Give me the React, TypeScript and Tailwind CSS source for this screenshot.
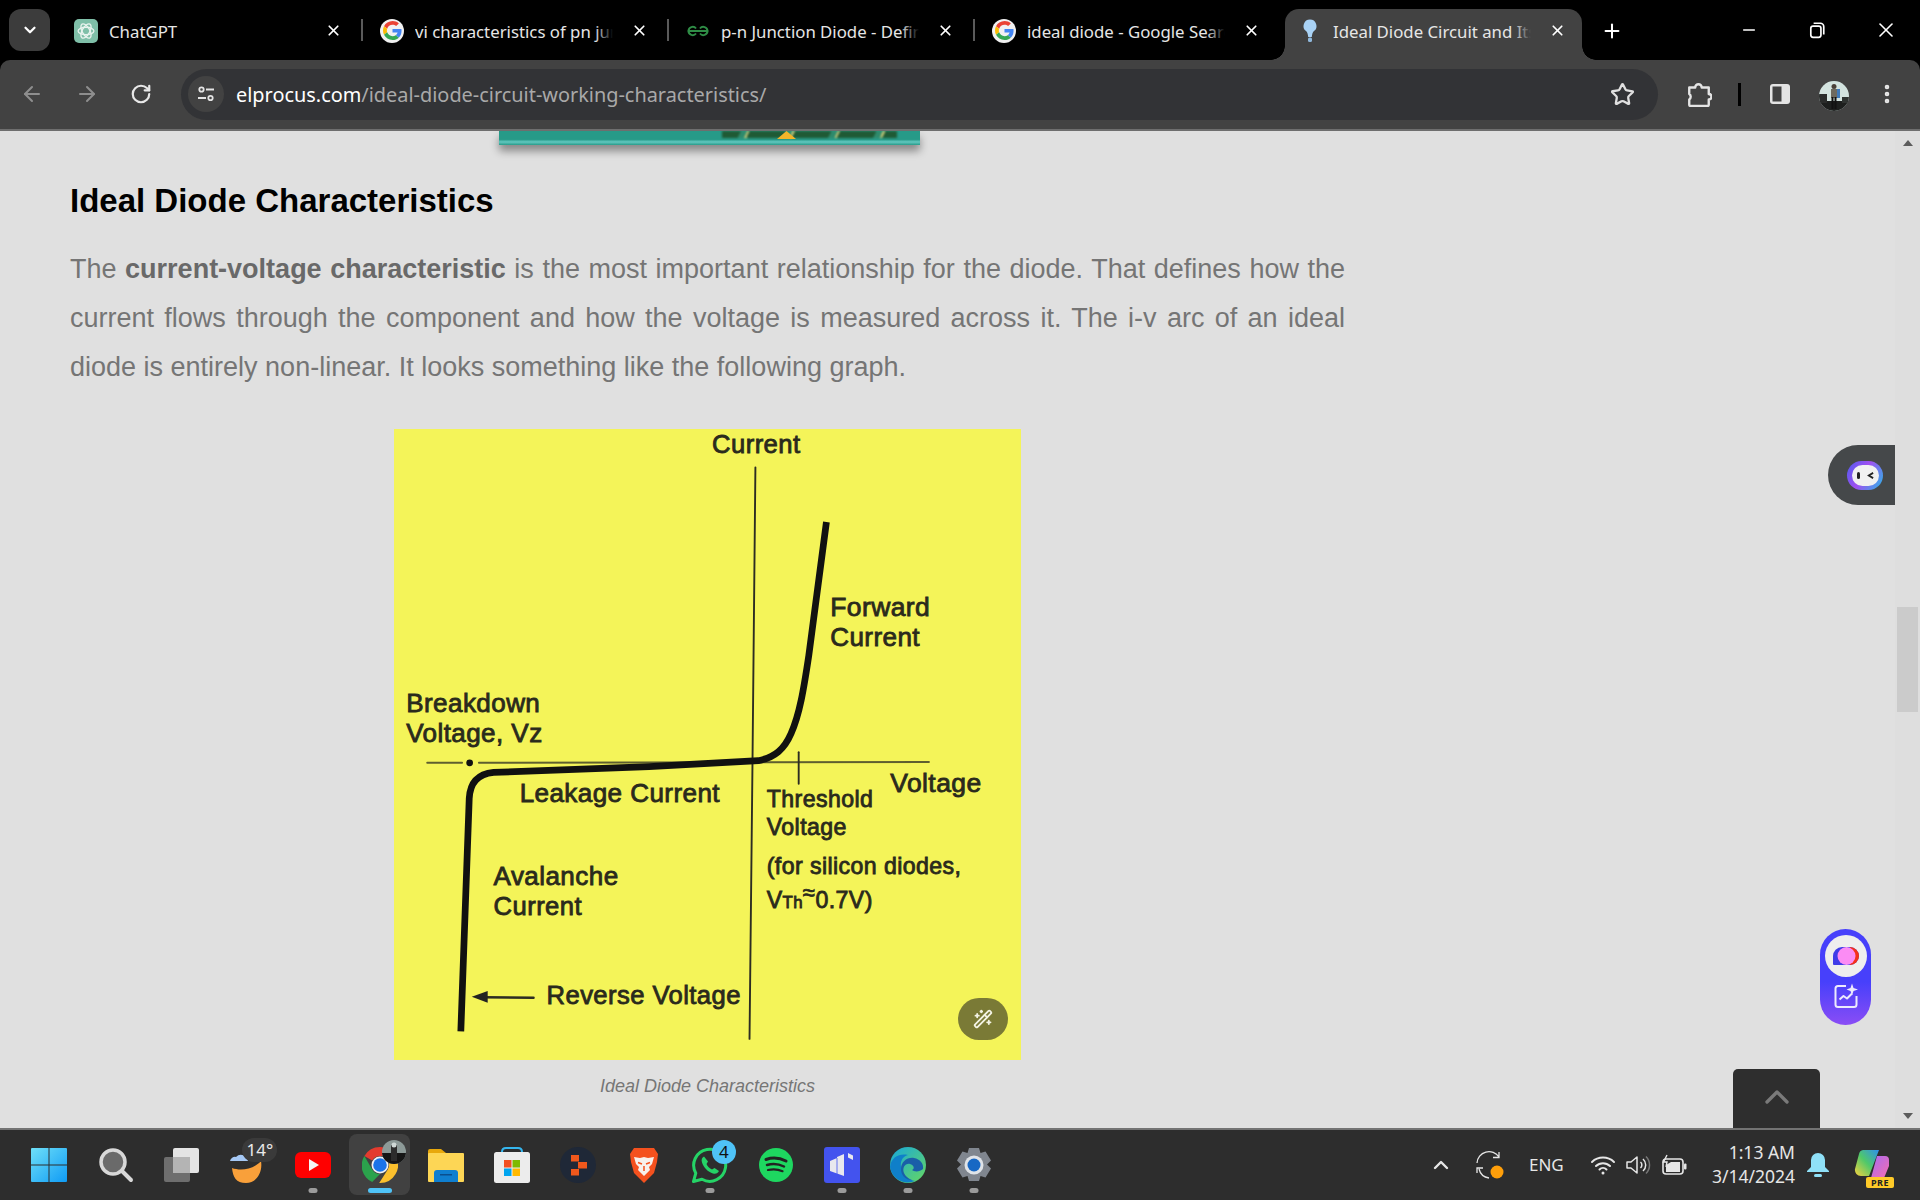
import { ArrowLeft, ArrowRight, ChevronDown, ChevronUp, Minus, MoreVertical, Plus, RotateCw, Star, WandSparkles, X } from "lucide-react";

const sans = "font-['Noto_Sans',sans-serif]";

function GoogleIcon() {
  return (
    <div className="w-6 h-6 rounded-full bg-[#f1f1f1] flex items-center justify-center">
      <svg viewBox="0 0 48 48" className="w-[19px] h-[19px]">
        <path fill="#EA4335" d="M24 9.5c3.5 0 6.7 1.300 9.200 3.400l6.900-6.900C35.900 2.200 30.300 0 24 0 14.600 0 6.500 5.400 2.600 13.200l8 6.200C12.500 13.600 17.800 9.500 24 9.500z" />
        <path fill="#4285F4" d="M46.900 24.500c0-1.600-.1-3.100-.4-4.500H24v9h12.900c-.6 3-2.200 5.500-4.700 7.200l7.700 6c4.500-4.200 7-10.300 7-17.700z" />
        <path fill="#FBBC05" d="M10.500 28.600c-.5-1.400-.8-3-.8-4.600s.3-3.200.8-4.600l-8-6.200C.9 16.500 0 20.100 0 24s.9 7.500 2.600 10.800l7.900-6.200z" />
        <path fill="#34A853" d="M24 48c6.500 0 11.900-2.100 15.900-5.800l-7.700-6c-2.200 1.500-4.900 2.300-8.200 2.300-6.200 0-11.500-4.200-13.400-9.800l-8 6.200C6.500 42.600 14.600 48 24 48z" />
      </svg>
    </div>
  );
}

function GptIcon() {
  return (
    <div className="w-6 h-6 rounded-[5px] bg-[#7fbfa8] flex items-center justify-center">
      <svg viewBox="0 0 24 24" className="w-5 h-5" fill="none" stroke="#e8f3ee" strokeWidth="1.600">
        <ellipse cx="12" cy="12" rx="9.500" ry="4.500" />
        <ellipse cx="12" cy="12" rx="9.500" ry="4.500" transform="rotate(60 12 12)" />
        <ellipse cx="12" cy="12" rx="9.500" ry="4.500" transform="rotate(120 12 12)" />
      </svg>
    </div>
  );
}

function GfgIcon() {
  return (
    <svg viewBox="0 0 24 24" className="w-6 h-6" fill="none" stroke="#2f8d46" strokeWidth="2">
      <path d="M12 12H2.500a4.200 4.200 0 0 1 7.500-2.500M12 12H2.500a4.200 4.200 0 0 0 7.500 2.500" />
      <path d="M12 12h9.500a4.200 4.200 0 0 0-7.500-2.500M12 12h9.500a4.200 4.200 0 0 1-7.500 2.500" />
    </svg>
  );
}

function BulbIcon() {
  return (
    <svg viewBox="0 0 24 24" className="w-6 h-6">
      <path fill="#a9d2f5" d="M12 0.500a6.500 6.500 0 0 0-4 11.600c1.400 1.200 2 3.400 2.200 6h3.600c.2-2.600.8-4.800 2.200-6A6.500 6.500 0 0 0 12 0.500z" />
      <rect x="10" y="18.500" width="4" height="4.500" rx="1.500" fill="#8fb8dc" />
    </svg>
  );
}

const tabs = [
  { title: "ChatGPT", icon: <GptIcon /> },
  { title: "vi characteristics of pn junction diode", icon: <GoogleIcon /> },
  { title: "p-n Junction Diode - Definition", icon: <GfgIcon /> },
  { title: "ideal diode - Google Search", icon: <GoogleIcon /> },
];

function Tab({ title, icon, active, last }: { title: string; icon: React.ReactNode; active?: boolean; last?: boolean }) {
  return (
    <div className="relative w-[306px] h-[51px] shrink-0 flex items-center pl-[15px] pb-[5px] text-[#e6e6e6]">
      {active && (
        <>
          <div className="absolute left-[2px] right-[7px] top-0 bottom-0 rounded-t-[14px] bg-[#424242]" />
          <div className="absolute left-[-12px] bottom-0 w-[14px] h-[14px] bg-[radial-gradient(circle_at_0_0,transparent_13.500px,#424242_14px)]" />
          <div className="absolute right-[-7px] bottom-0 w-[14px] h-[14px] bg-[radial-gradient(circle_at_100%_0,transparent_13.500px,#424242_14px)]" />
        </>
      )}
      <div className="relative w-6 h-6 shrink-0 -mt-[3px]">{icon}</div>
      <div className="relative ml-[11px] w-[198px] mr-[2px] overflow-hidden whitespace-nowrap text-[16.800px] leading-[24px] -mt-[1px]">
        {title}
        <div className={`absolute right-0 top-0 bottom-0 w-[18px] bg-gradient-to-l ${active ? "from-[#424242]" : "from-black"} to-transparent`} />
      </div>
      <X className="relative ml-[16px] -mt-[3px] w-[17px] h-[17px] text-white" strokeWidth={2.400} />
      {!last && !active && <div className="absolute right-[2px] top-[10px] h-[22px] w-[2px] bg-[#5a5a5a]" />}
    </div>
  );
}

function TabStrip() {
  return (
    <div className={`h-[60px] bg-black flex pt-[9px] pl-[9px] shrink-0 ${sans}`}>
      <div className="w-[41px] h-[42px] rounded-xl bg-[#3c3c3c] flex items-center justify-center mr-[9px] shrink-0">
        <ChevronDown className="w-[18px] h-[18px] text-white" strokeWidth={3} />
      </div>
      {tabs.map((t, i) => (
        <Tab key={i} title={t.title} icon={t.icon} last={i === 3} />
      ))}
      <Tab title="Ideal Diode Circuit and Its Working" icon={<BulbIcon />} active />
      <Plus className="ml-[12px] mt-[11px] w-[22px] h-[22px] text-white shrink-0" strokeWidth={2.200} />
      <div className="ml-auto flex items-start text-white">
        <div className="w-[68px] h-[42px] flex items-center justify-center pr-[2px]"><Minus className="w-[18px] h-[18px]" strokeWidth={2.200} /></div>
        <div className="w-[68px] h-[42px] flex items-center justify-center pr-[2px]">
          <svg viewBox="0 0 16 16" className="w-[18px] h-[18px]" fill="none" stroke="currentColor" strokeWidth="1.500">
            <rect x="2.500" y="4.500" width="9" height="10" rx="2" />
            <path d="M5 2h6a3 3 0 0 1 3 3v7" />
          </svg>
        </div>
        <div className="w-[68px] h-[42px] flex items-center justify-center"><X className="w-[24px] h-[24px]" strokeWidth={1.600} /></div>
      </div>
    </div>
  );
}

function Toolbar() {
  return (
    <div className="bg-black shrink-0">
      <div className={`h-[71px] bg-[#424242] rounded-t-[10px] border-b-2 border-[#6e6e6e] flex items-center pl-[10px] pb-[1px] ${sans}`}>
        <div className="w-11 flex justify-center"><ArrowLeft className="w-6 h-6 text-[#8e8e8e]" strokeWidth={2} /></div>
        <div className="w-11 ml-[11px] flex justify-center"><ArrowRight className="w-6 h-6 text-[#8e8e8e]" strokeWidth={2} /></div>
        <div className="w-11 ml-[10px] flex justify-center"><RotateCw className="w-[22px] h-[22px] text-[#e8e8e8]" strokeWidth={2.400} /></div>
        <div className="ml-[18px] w-[1477px] h-[51px] rounded-full bg-[#323336] flex items-center pl-[7px]">
          <div className="w-9 h-9 rounded-full bg-[#424242] flex items-center justify-center">
            <svg viewBox="0 0 20 20" className="w-5 h-5" fill="none" stroke="#e4e4e4" strokeWidth="1.800">
              <circle cx="5.500" cy="5.500" r="2.200" />
              <path d="M10 5.500h8M2 14h8" />
              <circle cx="14.500" cy="14" r="2.200" />
            </svg>
          </div>
          <div className="ml-[12px] mt-[1px] text-[19.900px] leading-[28px] whitespace-nowrap text-[#a9a9a9]">
            <span className="text-white">elprocus.com</span>/ideal-diode-circuit-working-characteristics/
          </div>
          <Star className="ml-auto mr-[23px] w-[25px] h-[25px] text-[#e0e0e0]" strokeWidth={2.200} />
        </div>
        <svg viewBox="0 0 24 24" className="ml-[28px] w-[26px] h-[26px]" fill="none" stroke="#e4e4e4" strokeWidth="2.200" strokeLinejoin="round">
          <path d="M3 6h5.500a3 3 0 0 1 6 0H21v6a2.500 2.500 0 0 1 0 5v5a1 1 0 0 1-1 1H4a1 1 0 0 1-1-1v-5a3 3 0 0 0 0-5z" />
        </svg>
        <div className="ml-[26px] w-[3px] h-[23px] bg-black" />
        <svg viewBox="0 0 22 22" className="ml-[28px] w-[22px] h-[22px]">
          <rect x="1" y="1" width="20" height="20" rx="3" fill="#e4e4e4" />
          <rect x="3.500" y="3.500" width="9" height="15" fill="#424242" />
        </svg>
        <svg viewBox="0 0 30 30" className="ml-[28px] mt-[3px] w-[30px] h-[30px]">
          <clipPath id="avatar-top"><circle cx="15" cy="15" r="15" /></clipPath>
          <g clipPath="url(#avatar-top)">
            <rect width="30" height="30" fill="#d3e3df" />
            <rect y="20" width="30" height="10" fill="#1d1f1e" />
            <rect x="0" y="13" width="8" height="9" fill="#2a2c2b" />
            <rect x="23" y="16" width="7" height="6" fill="#2f3331" />
            <rect x="12" y="8" width="6" height="9" fill="#6e6a5f" />
            <rect x="18" y="8" width="3" height="9" fill="#3f79b8" />
            <circle cx="15" cy="5.500" r="2.500" fill="#4a4038" />
            <rect x="12.500" y="16" width="2" height="12" fill="#111" />
            <rect x="15.500" y="16" width="2" height="12" fill="#111" />
          </g>
        </svg>
        <MoreVertical className="ml-[26px] w-6 h-6 text-[#e8e8e8]" strokeWidth={2.600} />
      </div>
    </div>
  );
}

const labels = [
  { t: "Current", x: 790, y: 78, s: 61 },
  { t: "Forward", x: 1071, y: 466, s: 63 },
  { t: "Current", x: 1071, y: 538, s: 62 },
  { t: "Breakdown", x: 62, y: 694, s: 62 },
  { t: "Voltage, Vz", x: 62, y: 766, s: 62 },
  { t: "Leakage Current", x: 332, y: 908, s: 62 },
  { t: "Voltage", x: 1214, y: 884, s: 63 },
  { t: "Threshold", x: 920, y: 920, s: 55 },
  { t: "Voltage", x: 920, y: 986, s: 55 },
  { t: "(for silicon diodes,", x: 920, y: 1080, s: 55 },
  { t: "Avalanche", x: 270, y: 1106, s: 62 },
  { t: "Current", x: 270, y: 1178, s: 61 },
  { t: "Reverse Voltage", x: 396, y: 1388, s: 61 },
];

function Diagram() {
  return (
    <div className="relative w-[627px] h-[631px] bg-[#f4f459] mx-auto">
      <svg viewBox="33 22 1492 1499" className="w-full h-full font-['Liberation_Sans',sans-serif]">
        <g fill="none" stroke="#2c2c22" strokeLinecap="round">
          <path d="M893 112 L886 820 L879 1472" strokeWidth="4.500" />
          <path d="M112 815 H195 M235 815 L1306 813" strokeWidth="4.500" opacity="0.75" />
          <path d="M996 790 V865" strokeWidth="4.500" />
          <path
            d="M1062 242 C1050 340 1035 450 1020 560 C1008 640 998 700 978 745 C962 782 940 802 900 810 L640 824 L270 838 C232 842 214 862 212 900 L192 1454"
            stroke="#111"
            strokeWidth="16"
            strokeLinecap="butt"
          />
          <path d="M245 1373 L365 1374" strokeWidth="6" />
        </g>
        <circle cx="213" cy="815" r="8" fill="#111" />
        <path d="M218 1372 L256 1358 V1386 Z" fill="#222" />
        {labels.map((l, i) => (
          <text key={i} x={l.x} y={l.y} fontSize={l.s} letterSpacing="1" fill="#2a2a1c" stroke="#2a2a1c" strokeWidth="2">
            {l.t}
          </text>
        ))}
        <text x="920" y="1160" fontSize="55" letterSpacing="1" fill="#2a2a1c" stroke="#2a2a1c" strokeWidth="2">
          V<tspan fontSize="40">Th</tspan>
          <tspan dy="-18" fontSize="52">≈</tspan>
          <tspan dy="18">0.7V)</tspan>
        </text>
      </svg>
      <div className="absolute right-[13px] bottom-[20px] w-[50px] h-[42px] rounded-full bg-[#7a7a36] flex items-center justify-center">
        <WandSparkles className="w-[20px] h-[20px] text-[#f3f3e4]" strokeWidth={2.200} />
      </div>
    </div>
  );
}

function Scrollbar() {
  return (
    <div className="relative w-[25px] shrink-0 bg-[#dedede] flex flex-col items-center justify-between py-[9px]">
      <div className="w-0 h-0 border-x-[5px] border-x-transparent border-b-[6px] border-b-[#5c5c5c]" />
      <div className="absolute left-[2px] top-[476px] w-[21px] h-[105px] bg-[#cbcbcb]" />
      <div className="w-0 h-0 border-x-[5px] border-x-transparent border-t-[6px] border-t-[#5c5c5c]" />
    </div>
  );
}

function Page() {
  return (
    <div className="relative flex-1 min-h-0 flex bg-[#e0e0e0] overflow-hidden">
      <div className="flex-1 min-w-0 pl-[70px] font-['Liberation_Sans',sans-serif]">
        <div className="w-[1275px]">
          <div className="ml-[429px] w-[421px] h-[14px] shadow-[0_6px_8px_rgba(0,0,0,0.4)] bg-[linear-gradient(to_top,#289b8a_0,#63c8c0_22%,#279a88_40%)] relative overflow-hidden">
            <div className="absolute left-[223px] top-0 w-[175px] h-[7px] blur-[1px] bg-[repeating-linear-gradient(115deg,#1f5a35_0,#1f5a35_17px,#2f8a6c_17px,#2f8a6c_23px,#cfcb78_23px,#cfcb78_25px,#1f5a35_25px,#1f5a35_41px)]" />
            <div className="absolute left-[278px] top-0 w-[19px] h-[8px] bg-[#f2b52a] [clip-path:polygon(50%_0,100%_100%,0_100%)]" />
          </div>
          <h2 className="mt-[36px] text-[33px] leading-[40px] font-bold text-black">Ideal Diode Characteristics</h2>
          <p className="mt-[24px] text-[27px] leading-[49px] text-[#757575] text-justify">
            The <strong className="font-bold text-[#696969]">current-voltage characteristic</strong> is the most important relationship for the diode. That defines how the current flows through the component and how the voltage is measured across it. The i-v arc of an ideal diode is entirely non-linear. It looks something like the following graph.
          </p>
          <div className="mt-[37px]">
            <Diagram />
          </div>
          <div className="mt-[16px] text-center text-[18px] leading-[20px] italic text-[#767676]">Ideal Diode Characteristics</div>
        </div>
      </div>
      <Scrollbar />

      {/* extension widgets on top of the page */}
      <div className="absolute left-[1828px] top-[314px] w-[67px] h-[60px] rounded-l-[30px] bg-[#45484a] flex items-center pl-[19px]">
        <div className="w-9 h-[29px] rounded-full bg-[linear-gradient(120deg,#4f5bf0,#a04ff0_45%,#28b8e8)] flex items-center justify-center">
          <div className="w-[27px] h-[21px] rounded-full bg-[#f1f1f1] flex items-center justify-center gap-[7px]">
            <div className="w-[3px] h-[7px] rounded-full bg-[#222]" />
            <svg viewBox="0 0 8 8" className="w-[7px] h-[7px]" fill="none" stroke="#222" strokeWidth="2"><path d="M7 1 2 4l5 3" /></svg>
          </div>
        </div>
      </div>
      <div className="absolute left-[1820px] top-[798px] w-[51px] h-[96px] rounded-full bg-[linear-gradient(to_bottom,#4740fb_55%,#8a4df5)] flex flex-col items-center pt-[6px]">
        <div className="w-[42px] h-[42px] rounded-full bg-[#eeeeee] flex items-center justify-center">
          <svg viewBox="0 0 28 20" className="w-[28px] h-[20px]">
            <path d="M10 1h8a9 9 0 0 1 0 18H2a1 1 0 0 1-1-1v-8a9 9 0 0 1 9-9z" fill="#3f3ce8" />
            <path d="M18 1a9 9 0 0 1 0 18z" fill="#f53019" />
            <circle cx="14.500" cy="10" r="9" fill="#fb8cf4" />
          </svg>
        </div>
        <svg viewBox="0 0 28 28" className="mt-[5px] w-[28px] h-[28px]" fill="none" stroke="#ecebfd" strokeWidth="2" strokeLinejoin="round">
          <path d="M14 4H6a2.500 2.500 0 0 0-2.500 2.500v16A2.500 2.500 0 0 0 6 25h16a2.500 2.500 0 0 0 2.500-2.500V14" />
          <path d="m7.500 17.500 4-3.500 3.500 2.500 5-5" />
          <path d="M20 1.500 21.500 6 26 7.500 21.500 9 20 13.500 18.500 9 14.500 7.500 18.500 6z" fill="#ecebfd" stroke="none" />
        </svg>
      </div>
      <div className="absolute left-[1733px] bottom-0 w-[87px] h-[59px] rounded-t-[5px] bg-[#2e2e2e] flex items-center justify-center">
        <ChevronUp className="w-[40px] h-[40px] text-[#7a7a7a] -mt-[4px]" strokeWidth={2} />
      </div>
    </div>
  );
}

function TaskIcon({ children, dot, active }: { children: React.ReactNode; dot?: boolean; active?: boolean }) {
  return (
    <div className="relative w-[66.100px] h-full flex items-center justify-center shrink-0">
      {active && <div className="absolute left-[3px] right-[3px] top-[4px] bottom-[5px] rounded-lg bg-[#414141]" />}
      <div className="relative w-9 h-9">{children}</div>
      {dot && <div className="absolute bottom-[7px] left-1/2 -translate-x-1/2 w-[9px] h-[5px] rounded-full bg-[#9b9b9b]" />}
      {active && <div className="absolute bottom-[7px] left-1/2 -translate-x-1/2 w-[24px] h-[5px] rounded-full bg-[#4fc3f7]" />}
    </div>
  );
}

function ChromeLogo() {
  return (
    <svg viewBox="0 0 36 36" className="w-9 h-9">
      <path d="M18 0a18 18 0 0 1 15.600 9H18a9 9 0 0 0-7.800 4.500L2.400 9A18 18 0 0 1 18 0z" fill="#e33b2e" />
      <path d="M2.400 9l7.800 13.500a9 9 0 0 0 7.800 4.500L10.200 35A18 18 0 0 1 2.400 9z" fill="#2ba24c" />
      <path d="M33.600 9A18 18 0 0 1 18 36h-0.800l8.600-13.500A9 9 0 0 0 25.800 13.500V9z" fill="#fbc02d" />
      <circle cx="18" cy="18" r="8.500" fill="#f1f1f1" />
      <circle cx="18" cy="18" r="6.800" fill="#1a73e8" />
    </svg>
  );
}

function Taskbar() {
  return (
    <div className={`h-[72px] shrink-0 bg-[#2d2d2d] border-t-2 border-[#737373] flex items-stretch pl-[16px] ${sans}`}>
      <TaskIcon>
        <svg viewBox="0 0 36 36" className="w-9 h-9">
          <defs>
            <linearGradient id="win" x1="0" y1="0" x2="1" y2="1">
              <stop offset="0" stopColor="#6fe0f8" />
              <stop offset="1" stopColor="#0f9bf5" />
            </linearGradient>
          </defs>
          <path d="M1 1h16.500v16.500H0V2a1 1 0 0 1 1-1zM18.500 1H35a1 1 0 0 1 1 1v15.500H18.500zM0 18.500h17.500V35H1a1 1 0 0 1-1-1zM18.500 18.500H36V34a1 1 0 0 1-1 1H18.500z" fill="url(#win)" />
        </svg>
      </TaskIcon>
      <TaskIcon>
        <svg viewBox="0 0 36 36" className="w-9 h-9 ml-[1px]">
          <circle cx="15" cy="15" r="12" fill="#6a6a6a" stroke="#d8d8d8" strokeWidth="3.500" />
          <path d="M24 24l9 9" stroke="#d8d8d8" strokeWidth="4" strokeLinecap="round" />
        </svg>
      </TaskIcon>
      <TaskIcon>
        <svg viewBox="0 0 36 36" className="w-9 h-9">
          <rect x="1" y="10" width="26" height="25" rx="2" fill="#6e6e6e" />
          <rect x="10" y="1" width="26" height="25" rx="2" fill="#e4e4e4" />
          <rect x="10" y="10" width="17" height="16" fill="#b4b4b4" />
        </svg>
      </TaskIcon>
      <TaskIcon>
        <svg viewBox="0 0 36 36" className="w-9 h-9">
          <path d="M3 21c8 3 21 2 29-7 2 12-5 22-15 22S4 30 3 21z" fill="#f9a03a" />
          <path d="M1 14a5 5 0 0 1 6-4 7 7 0 0 1 12 4z" fill="#a5c8f5" />
        </svg>
        <div className="absolute left-[13px] -top-[9px] w-[35px] h-[24px] rounded-full bg-[#3a3a3a] text-[#eaeaea] text-[17px] leading-[24px] text-center">14°</div>
      </TaskIcon>
      <TaskIcon dot>
        <svg viewBox="0 0 36 36" className="w-9 h-9">
          <rect y="5" width="36" height="26" rx="6" fill="#f00" />
          <path d="M14 12l10 6-10 6z" fill="#f4f4f4" />
        </svg>
      </TaskIcon>
      <TaskIcon active>
        <ChromeLogo />
        <svg viewBox="0 0 24 24" className="absolute -right-[8px] -top-[7px] w-6 h-6">
          <clipPath id="avatar-small"><circle cx="12" cy="12" r="12" /></clipPath>
          <g clipPath="url(#avatar-small)">
            <rect width="24" height="24" fill="#8d9a98" />
            <rect y="13" width="24" height="11" fill="#161616" />
            <rect x="9" y="5" width="6" height="16" fill="#2c2c2c" />
            <circle cx="12" cy="5" r="2.500" fill="#cfd8d6" />
          </g>
        </svg>
      </TaskIcon>
      <TaskIcon>
        <svg viewBox="0 0 36 36" className="w-9 h-9">
          <path d="M0 4a2 2 0 0 1 2-2h11l5 4v6H0z" fill="#e8a80c" />
          <rect y="6" width="36" height="29" rx="1" fill="#fdd655" />
          <path d="M6 26a3 3 0 0 1 3-3h18a3 3 0 0 1 3 3v9H6z" fill="#0f7fd0" />
          <rect x="12" y="27" width="12" height="1.500" fill="#0a4f8e" />
        </svg>
      </TaskIcon>
      <TaskIcon>
        <svg viewBox="0 0 36 36" className="w-9 h-9">
          <path d="M8 5c0-3 1-4 4-4h12c3 0 4 1 4 4" fill="none" stroke="#35b6ef" strokeWidth="2" />
          <rect y="5" width="36" height="31" rx="2.500" fill="#ececec" />
          <rect x="10" y="13" width="7.500" height="7.500" fill="#f25022" />
          <rect x="18.500" y="13" width="7.500" height="7.500" fill="#7fba00" />
          <rect x="10" y="21.500" width="7.500" height="7.500" fill="#00a4ef" />
          <rect x="18.500" y="21.500" width="7.500" height="7.500" fill="#ffb900" />
        </svg>
      </TaskIcon>
      <TaskIcon>
        <svg viewBox="0 0 36 36" className="w-9 h-9">
          <circle cx="18" cy="18" r="18" fill="#1f2837" />
          <rect x="11" y="8" width="8" height="6.500" fill="#f0581c" />
          <rect x="18" y="15" width="9" height="6.500" fill="#f0581c" />
          <rect x="11" y="22" width="8" height="6.500" fill="#f0581c" />
        </svg>
      </TaskIcon>
      <TaskIcon>
        <svg viewBox="0 0 36 36" className="w-9 h-9">
          <path d="M8 1h20l4 6-1 8-3 11-10 10-10-10-3-11-1-8z" fill="#f4511e" />
          <path d="M8 10l6 1 4-1 4 1 6-1-2 7-3 3 1 3-6 6-6-6 1-3-3-3z" fill="#f7f1ec" />
          <path d="M12 15.500l4 1.500M24 15.500l-4 1.500M18 19v5" stroke="#f4511e" strokeWidth="1.500" fill="none" />
        </svg>
      </TaskIcon>
      <TaskIcon dot>
        <svg viewBox="0 0 36 36" className="w-9 h-9">
          <path d="M1.500 34.500l2.300-8.300A16 16 0 1 1 10 32.300z" fill="none" stroke="#25d366" strokeWidth="3" strokeLinejoin="round" />
          <path d="M12 9.500c-2 1-3 3-2 6 1.500 5 6 9.500 11 11 3 .8 5-.5 6-2.500l-4.500-3-2.500 1.500c-2.500-1-4.500-3-5.500-5.500l1.500-2.500z" fill="#25d366" />
        </svg>
        <div className="absolute -right-[8px] -top-[7px] w-6 h-6 rounded-full bg-[#4fc3f7] text-[#111] text-[17px] leading-6 text-center">4</div>
      </TaskIcon>
      <TaskIcon>
        <svg viewBox="0 0 36 36" className="w-9 h-9">
          <circle cx="18" cy="18" r="17" fill="#1ed760" />
          <g fill="none" stroke="#222" strokeLinecap="round">
            <path d="M8 12.500c6-2 14-1.500 20 1.500" strokeWidth="3" />
            <path d="M9 18c5-1.500 12-1 17 1.500" strokeWidth="2.500" />
            <path d="M10 23c4.500-1 10-.8 14.500 1.200" strokeWidth="2.200" />
          </g>
        </svg>
      </TaskIcon>
      <TaskIcon dot>
        <svg viewBox="0 0 36 36" className="w-9 h-9">
          <rect width="36" height="36" rx="3" fill="#4353ee" />
          <path d="M6 14l7-3v-1l7-3v22l-14-5zM24 6l5 2.500v4.500l-5-2.500z" fill="#e8e8ee" />
          <path d="M13 11v16" stroke="#4353ee" strokeWidth="0.800" />
        </svg>
      </TaskIcon>
      <TaskIcon dot>
        <svg viewBox="0 0 36 36" className="w-9 h-9">
          <defs>
            <linearGradient id="edge" x1="0" y1="0" x2="1" y2="1">
              <stop offset="0" stopColor="#17a7dc" />
              <stop offset="1" stopColor="#67d860" />
            </linearGradient>
          </defs>
          <circle cx="18" cy="18" r="18" fill="url(#edge)" />
          <path d="M0 20C1 10 10 6 18 8c-5 1-8 6-7 12 1 8 8 13 14 14a18 18 0 0 1-25-14z" fill="#0f7fc9" />
          <path d="M11 22c0-7 6-12 13-11 6 1 10 6 9 11-3 3-9 3-11 1 3-1 2-5-2-6-5-1-8 4-6 9 1 3 5 6 8 7-7 0-11-5-11-11z" fill="#1a5fa8" />
        </svg>
      </TaskIcon>
      <TaskIcon dot>
        <svg viewBox="0 0 36 36" className="w-9 h-9">
          <path d="M13 1h10l1.500 5 5-1.500 5.500 9-4 4 4 4-5.500 9-5-1.500-1.500 5H13l-1.500-5-5 1.500-5.500-9 4-4-4-4 5.500-9 5 1.500z" fill="#80868f" />
          <circle cx="18" cy="18" r="9.500" fill="#dfe3e8" />
          <circle cx="18" cy="18" r="6.500" fill="#1868c4" />
        </svg>
      </TaskIcon>

      {/* system tray */}
      <div className="ml-auto mr-[28px] flex items-center text-[#e6e6e6]">
        <ChevronUp className="w-[30px] h-[24px]" strokeWidth={2.400} />
        <svg viewBox="0 0 32 32" className="ml-[17px] w-8 h-8" fill="none" stroke="#e6e6e6" strokeWidth="1.300">
          <path d="M4 14A12 12 0 0 1 26 8M26 3v5.500h-6M4 24v-5h6M6 20a12 12 0 0 0 10 9" />
          <circle cx="24" cy="23" r="6.500" fill="#ff9f0a" stroke="none" />
        </svg>
        <div className="ml-[24px] w-[35px] text-[17px] leading-6 whitespace-nowrap">ENG</div>
        <svg viewBox="0 0 26 20" className="ml-[26px] w-[26px] h-5" fill="none" stroke="#e6e6e6" strokeWidth="2" strokeLinecap="round">
          <path d="M2 7a16 16 0 0 1 22 0M6 11a10 10 0 0 1 14 0M9.500 14.500a5 5 0 0 1 7 0" />
          <circle cx="13" cy="18" r="1.500" fill="#e6e6e6" stroke="none" />
        </svg>
        <svg viewBox="0 0 26 22" className="ml-[9px] w-[26px] h-[22px]" fill="none" stroke="#e6e6e6" strokeWidth="1.500" strokeLinejoin="round">
          <path d="M2 8v6h4l6 5V3L6 8z" />
          <path d="M15.500 8a4 4 0 0 1 0 6M18 5a8 8 0 0 1 0 12" />
          <path d="M21 2.500a12 12 0 0 1 0 17" stroke="#777" />
        </svg>
        <svg viewBox="0 0 26 22" className="ml-[11px] w-[26px] h-[22px]">
          <rect x="1" y="5" width="20" height="15" rx="3" fill="none" stroke="#e6e6e6" strokeWidth="1.600" />
          <path d="M4 18V11l5-3h9v10z" fill="#e6e6e6" />
          <rect x="22" y="9.500" width="2.500" height="6" rx="1" fill="#e6e6e6" />
          <path d="M5 1 1.500 8H5l-1 5" fill="none" stroke="#e6e6e6" strokeWidth="1.400" />
        </svg>
        <div className="ml-[7px] -mt-[2px] w-[100px] text-right text-[17.500px] leading-[24px] whitespace-nowrap">
          <div>1:13 AM</div>
          <div>3/14/2024</div>
        </div>
        <svg viewBox="0 0 24 26" className="ml-[11px] w-6 h-[26px]">
          <path d="M12 1a7 7 0 0 0-7 7v7l-4 4v1h22v-1l-4-4V8a7 7 0 0 0-7-7z" fill="#8fe0f7" />
          <rect x="8" y="22" width="8" height="3" rx="1.500" fill="#8fe0f7" />
        </svg>
        <div className="relative ml-[24px] w-[38px] h-[38px]">
          <svg viewBox="0 0 36 36" className="w-9 h-9">
            <defs>
              <linearGradient id="copA" x1="0" y1="1" x2="1" y2="0">
                <stop offset="0" stopColor="#f7d23e" />
                <stop offset="0.5" stopColor="#4fc86a" />
                <stop offset="1" stopColor="#2f8ff0" />
              </linearGradient>
              <linearGradient id="copB" x1="0" y1="0" x2="1" y2="1">
                <stop offset="0" stopColor="#a86bf2" />
                <stop offset="1" stopColor="#f56db0" />
              </linearGradient>
            </defs>
            <path d="M9 4h16L15 30H7a6 6 0 0 1-6-7l4-15a5 5 0 0 1 4-4z" fill="url(#copA)" />
            <path d="M23 10h8a4 4 0 0 1 4 4v6l-5 12H17z" fill="url(#copB)" />
          </svg>
          <div className="absolute -right-[2px] bottom-[-4px] w-[28px] h-[11px] rounded-[2px] bg-[#ffca28] text-[#222] text-[9px] leading-[11px] font-bold text-center tracking-[0.5px]">PRE</div>
        </div>
      </div>
    </div>
  );
}

export default function App() {
  return (
    <div className="w-[1920px] h-[1200px] flex flex-col overflow-hidden">
      <TabStrip />
      <Toolbar />
      <Page />
      <Taskbar />
    </div>
  );
}
